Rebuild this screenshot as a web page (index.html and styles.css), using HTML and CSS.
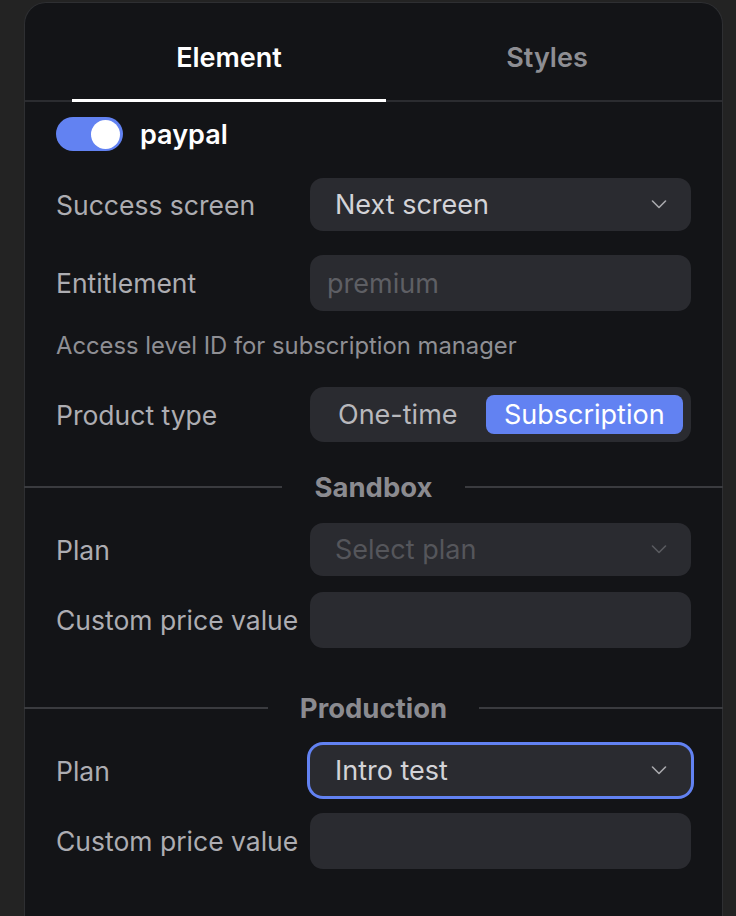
FILE: index.html
```html
<!DOCTYPE html>
<html lang="en">
<head>
<meta charset="utf-8">
<title>Element panel</title>
<link rel="stylesheet" href="styles.css">
</head>
<body>
<div class="panel">
  <div class="tabs">
    <div class="tab active">Element</div>
    <div class="tab">Styles</div>
  </div>
  <div class="content">
    <div class="toggle-row">
      <span class="toggle"><span class="knob"></span></span>
      <span class="toggle-label">paypal</span>
    </div>

    <div class="row r-success">
      <div class="label">Success screen</div>
      <div class="select">
        <span class="value">Next screen</span>
        <svg class="chev" width="16" height="9" viewBox="0 0 16 9"><polyline points="1.5,1 8,7.5 14.5,1" fill="none" stroke="currentColor" stroke-width="1.6" stroke-linecap="round" stroke-linejoin="round"/></svg>
      </div>
    </div>

    <div class="row r-ent">
      <div class="label">Entitlement</div>
      <div class="input"><span class="placeholder">premium</span></div>
    </div>

    <div class="helper">Access level ID for subscription manager</div>

    <div class="row r-type">
      <div class="label">Product type</div>
      <div class="segmented">
        <span class="seg">One-time</span>
        <span class="seg selected">Subscription</span>
      </div>
    </div>

    <div class="divider d-sandbox"><span>Sandbox</span></div>

    <div class="row r-plan1">
      <div class="label">Plan</div>
      <div class="select disabled">
        <span class="value">Select plan</span>
        <svg class="chev" width="16" height="9" viewBox="0 0 16 9"><polyline points="1.5,1 8,7.5 14.5,1" fill="none" stroke="currentColor" stroke-width="1.6" stroke-linecap="round" stroke-linejoin="round"/></svg>
      </div>
    </div>

    <div class="row r-price1">
      <div class="label">Custom price value</div>
      <div class="input"></div>
    </div>

    <div class="divider d-prod"><span>Production</span></div>

    <div class="row r-plan2">
      <div class="label">Plan</div>
      <div class="select focused">
        <span class="value">Intro test</span>
        <svg class="chev" width="16" height="9" viewBox="0 0 16 9"><polyline points="1.5,1 8,7.5 14.5,1" fill="none" stroke="currentColor" stroke-width="1.6" stroke-linecap="round" stroke-linejoin="round"/></svg>
      </div>
    </div>

    <div class="row r-price2">
      <div class="label">Custom price value</div>
      <div class="input"></div>
    </div>
  </div>
</div>
</body>
</html>
```

FILE: styles.css
```css
* { box-sizing: border-box; }

html, body {
  margin: 0;
  padding: 0;
  background: #232323;
  height: 100%;
  overflow: hidden;
}

body {
  font-family: Inter, "Noto Sans", "Liberation Sans", sans-serif;
  -webkit-font-smoothing: antialiased;
}

.panel {
  margin: 2px 0 0 24px;
  width: 699px;
  min-height: 930px;
  background: #131417;
  border: 1px solid #2e2f32;
  border-bottom: none;
  border-radius: 22px 22px 0 0;
}

.tabs {
  display: flex;
  gap: 4px;
  padding-left: 47px;
  border-bottom: 2px solid #2b2c30;
}

.tab {
  width: 314px;
  height: 99px;
  padding-top: 40px;
  line-height: 30px;
  text-align: center;
  font-size: 27px;
  font-weight: 600;
  color: #8e8e93;
  border-bottom: 3px solid transparent;
  margin-bottom: -2px;
}

.tab.active {
  color: #ffffff;
  border-bottom-color: #ffffff;
}

.content {
  padding: 0 31px;
}

.toggle-row {
  display: flex;
  align-items: center;
  gap: 17px;
  margin-top: 15px;
  height: 34px;
}

.toggle {
  width: 67px;
  height: 34px;
  border-radius: 17px;
  background: #6282f2;
  display: flex;
  align-items: center;
  justify-content: flex-end;
  padding-right: 3px;
}

.knob {
  width: 29px;
  height: 29px;
  border-radius: 50%;
  background: #ffffff;
}

.toggle-label {
  font-size: 27px;
  font-weight: 600;
  color: #ffffff;
}

.row {
  display: flex;
  align-items: center;
}

.label {
  width: 254px;
  flex: none;
  font-size: 26.5px;
  color: #adadb2;
  white-space: nowrap;
}

.select, .input {
  flex: 1;
  background: #2a2b30;
  border-radius: 13px;
  display: flex;
  align-items: center;
  font-size: 27px;
  white-space: nowrap;
}

.select {
  height: 53px;
  padding: 0 24px 0 25px;
}

.input {
  height: 56px;
  padding: 0 17px;
}

.value {
  flex: 1;
  color: #d3d3d7;
}

.chev {
  color: #a9a9ad;
  flex: none;
}

.select.disabled .value { color: #55565b; }
.select.disabled .chev { color: #5a5b60; }

.select.focused {
  height: 51px;
  box-shadow: 0 0 0 3px #6282f2;
}

.placeholder { color: #5e5f64; }

.helper {
  margin-top: 20px;
  line-height: 30px;
  font-size: 23.8px;
  color: #8f8f94;
}

.segmented {
  flex: 1;
  min-width: 0;
  height: 55px;
  background: #2a2b30;
  border-radius: 14px;
  padding: 8px;
  display: flex;
  gap: 8px;
}

.seg {
  flex: none;
  padding: 0 20px;
  display: flex;
  align-items: center;
  font-size: 27px;
  color: #b8b8bc;
  border-radius: 8px;
  white-space: nowrap;
}

.seg.selected {
  flex: 1;
  min-width: 0;
  padding: 0 10px;
  justify-content: center;
  background: #6282f2;
  color: #ffffff;
}

.divider {
  display: flex;
  align-items: center;
  gap: 32px;
  margin: 0 -32px;
  height: 30px;
  font-size: 27.5px;
  font-weight: 700;
  color: #8b8b90;
}

.divider::before, .divider::after {
  content: "";
  flex: 1;
  height: 2px;
  background: #3a3b3f;
}

.r-success { margin-top: 27px; }
.r-ent { margin-top: 24px; }
.r-type { margin-top: 26px; }
.d-sandbox { margin-top: 30px; }
.r-plan1 { margin-top: 21px; }
.r-price1 { margin-top: 16px; }
.d-prod { margin-top: 45px; }
.r-plan2 { margin-top: 22px; }
.r-price2 { margin-top: 17px; }
```
